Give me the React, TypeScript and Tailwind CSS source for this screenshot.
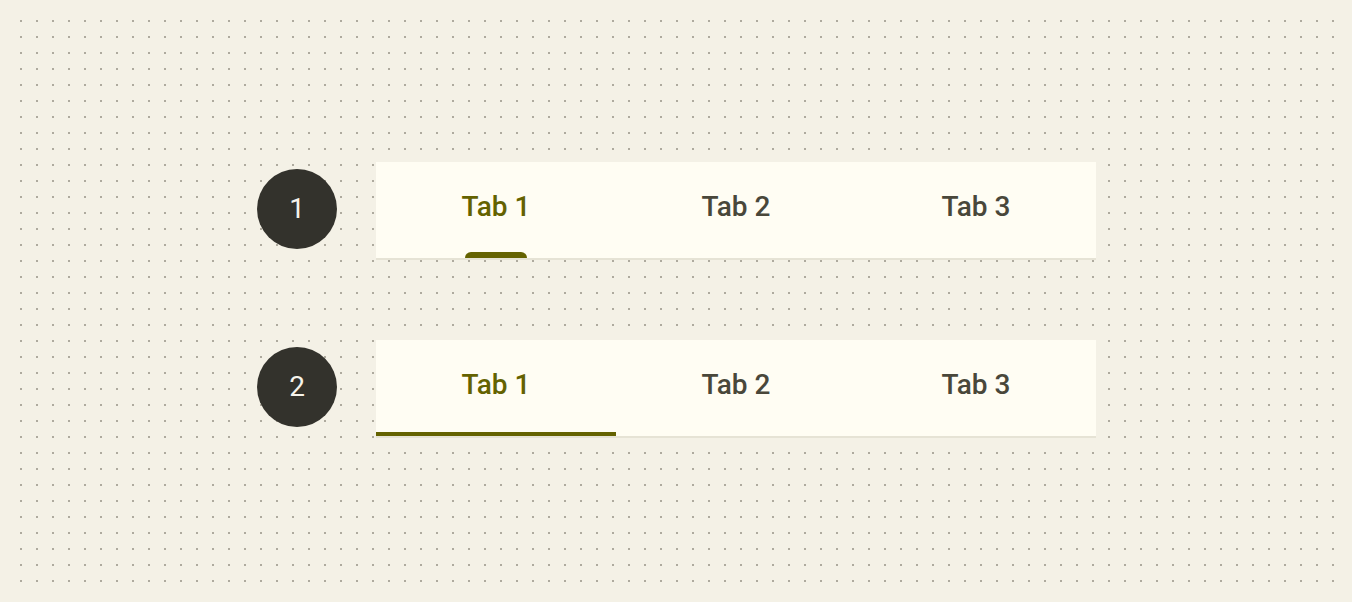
import { useState } from 'react'

const tabs = ['Tab 1', 'Tab 2', 'Tab 3']

function Badge({ n }: { n: number }) {
  return (
    <div className="mt-[7px] flex h-[80px] w-[80px] shrink-0 items-center justify-center rounded-full bg-[#33322c] text-[28px] text-[#f6f3eb]">
      {n}
    </div>
  )
}

function PrimaryTabs() {
  const [active, setActive] = useState(0)
  return (
    <div className="w-[720px] border-b-2 border-[#e6e3d5] bg-[#fffdf3]">
      <div className="flex h-[96px]">
        {tabs.map((t, i) => (
          <button
            key={t}
            onClick={() => setActive(i)}
            className={`flex flex-1 flex-col items-center justify-end ${i === active ? 'text-[#646200]' : 'text-[#49473a]'}`}
          >
            <span className="flex flex-1 items-center pb-[1px] text-[28px] font-medium">{t}</span>
            <span className={`h-[6px] w-[62px] rounded-t-[6px] ${i === active ? 'bg-[#646200]' : 'bg-transparent'}`} />
          </button>
        ))}
      </div>
    </div>
  )
}

function SecondaryTabs() {
  const [active, setActive] = useState(0)
  return (
    <div className="w-[720px] border-b-2 border-[#e6e3d5] bg-[#fffdf3]">
      <div className="flex h-[96px]">
        {tabs.map((t, i) => (
          <button
            key={t}
            onClick={() => setActive(i)}
            className={`flex flex-1 flex-col ${i === active ? 'text-[#646200]' : 'text-[#49473a]'}`}
          >
            <span className="flex flex-1 items-center justify-center pb-[2px] text-[28px] font-medium">{t}</span>
            <span className={`h-[4px] w-full ${i === active ? 'bg-[#646200]' : 'bg-transparent'}`} />
          </button>
        ))}
      </div>
    </div>
  )
}

export default function App() {
  return (
    <div className="h-[602px] w-full bg-[#f4f1e6] pl-[20px] pt-[20px] pr-[16px] pb-[18px] font-['Roboto',sans-serif]">
      <div className="flex h-full w-full flex-col items-start justify-center gap-[80px] bg-[conic-gradient(at_2px_2px,transparent_75%,#aeaa9e_0)] bg-[length:16px_16px] pl-[237px] pr-[240px] pb-[4px]">
        <div className="flex items-start gap-[39px]">
          <Badge n={1} />
          <PrimaryTabs />
        </div>
        <div className="flex items-start gap-[39px]">
          <Badge n={2} />
          <SecondaryTabs />
        </div>
      </div>
    </div>
  )
}
